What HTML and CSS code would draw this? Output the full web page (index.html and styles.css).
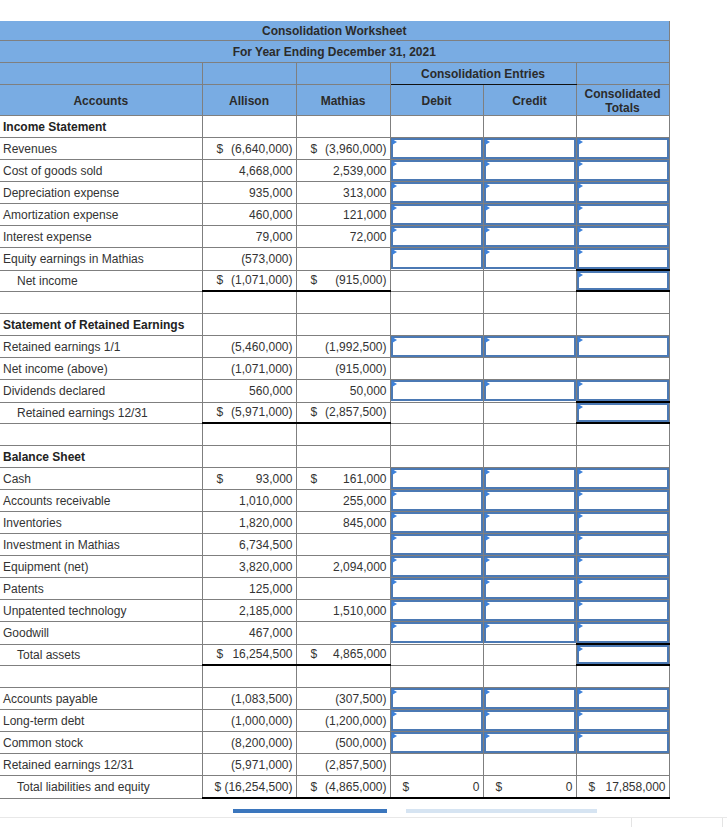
FILE: index.html
```html
<!DOCTYPE html>
<html>
<head>
<meta charset="utf-8">
<link rel="stylesheet" href="styles.css">
</head>
<body>
<div class="page">
<table class="ws">
<colgroup>
<col class="c-acct"><col class="c-al"><col class="c-ma"><col class="c-de"><col class="c-cr"><col class="c-to">
</colgroup>
<thead>
<tr class="h1"><th colspan="6">Consolidation Worksheet</th></tr>
<tr class="h2"><th colspan="6">For Year Ending December 31, 2021</th></tr>
<tr class="h3"><th></th><th></th><th></th><th colspan="2" class="entries">Consolidation Entries</th><th></th></tr>
<tr class="h4"><th>Accounts</th><th>Allison</th><th>Mathias</th><th>Debit</th><th>Credit</th><th class="tot">Consolidated<br>Totals</th></tr>
</thead>
<tbody>
<tr><td class="acct sec">Income Statement</td><td></td><td></td><td></td><td></td><td></td></tr>
<tr><td class="acct">Revenues</td><td class="num"><div class="money"><span>$</span><span>(6,640,000)</span></div></td><td class="num"><div class="money"><span>$</span><span>(3,960,000)</span></div></td><td class="in"><div class="inp"></div></td><td class="in"><div class="inp"></div></td><td class="in"><div class="inp"></div></td></tr>
<tr><td class="acct">Cost of goods sold</td><td class="num">4,668,000</td><td class="num">2,539,000</td><td class="in"><div class="inp"></div></td><td class="in"><div class="inp"></div></td><td class="in"><div class="inp"></div></td></tr>
<tr><td class="acct">Depreciation expense</td><td class="num">935,000</td><td class="num">313,000</td><td class="in"><div class="inp"></div></td><td class="in"><div class="inp"></div></td><td class="in"><div class="inp"></div></td></tr>
<tr><td class="acct">Amortization expense</td><td class="num">460,000</td><td class="num">121,000</td><td class="in"><div class="inp"></div></td><td class="in"><div class="inp"></div></td><td class="in"><div class="inp"></div></td></tr>
<tr><td class="acct">Interest expense</td><td class="num">79,000</td><td class="num">72,000</td><td class="in"><div class="inp"></div></td><td class="in"><div class="inp"></div></td><td class="in"><div class="inp"></div></td></tr>
<tr><td class="acct">Equity earnings in Mathias</td><td class="num">(573,000)</td><td class="num"></td><td class="in"><div class="inp"></div></td><td class="in"><div class="inp"></div></td><td class="in"><div class="inp"></div></td></tr>
<tr class="total"><td class="acct ind">Net income</td><td class="num tl"><div class="money"><span>$</span><span>(1,071,000)</span></div></td><td class="num tl"><div class="money"><span>$</span><span>(915,000)</span></div></td><td></td><td></td><td class="in tl tt"><div class="inp"></div></td></tr>
<tr><td class="acct"></td><td></td><td></td><td></td><td></td><td></td></tr>

<tr><td class="acct sec">Statement of Retained Earnings</td><td></td><td></td><td></td><td></td><td></td></tr>
<tr><td class="acct">Retained earnings 1/1</td><td class="num">(5,460,000)</td><td class="num">(1,992,500)</td><td class="in"><div class="inp"></div></td><td class="in"><div class="inp"></div></td><td class="in"><div class="inp"></div></td></tr>
<tr><td class="acct">Net income (above)</td><td class="num">(1,071,000)</td><td class="num">(915,000)</td><td></td><td></td><td></td></tr>
<tr><td class="acct">Dividends declared</td><td class="num">560,000</td><td class="num">50,000</td><td class="in"><div class="inp"></div></td><td class="in"><div class="inp"></div></td><td class="in"><div class="inp"></div></td></tr>
<tr class="total"><td class="acct ind">Retained earnings 12/31</td><td class="num tl"><div class="money"><span>$</span><span>(5,971,000)</span></div></td><td class="num tl"><div class="money"><span>$</span><span>(2,857,500)</span></div></td><td></td><td></td><td class="in tl tt"><div class="inp"></div></td></tr>
<tr><td class="acct"></td><td></td><td></td><td></td><td></td><td></td></tr>

<tr><td class="acct sec">Balance Sheet</td><td></td><td></td><td></td><td></td><td></td></tr>
<tr><td class="acct">Cash</td><td class="num"><div class="money"><span>$</span><span>93,000</span></div></td><td class="num"><div class="money"><span>$</span><span>161,000</span></div></td><td class="in"><div class="inp"></div></td><td class="in"><div class="inp"></div></td><td class="in"><div class="inp"></div></td></tr>
<tr><td class="acct">Accounts receivable</td><td class="num">1,010,000</td><td class="num">255,000</td><td class="in"><div class="inp"></div></td><td class="in"><div class="inp"></div></td><td class="in"><div class="inp"></div></td></tr>
<tr><td class="acct">Inventories</td><td class="num">1,820,000</td><td class="num">845,000</td><td class="in"><div class="inp"></div></td><td class="in"><div class="inp"></div></td><td class="in"><div class="inp"></div></td></tr>
<tr><td class="acct">Investment in Mathias</td><td class="num">6,734,500</td><td class="num"></td><td class="in"><div class="inp"></div></td><td class="in"><div class="inp"></div></td><td class="in"><div class="inp"></div></td></tr>
<tr><td class="acct">Equipment (net)</td><td class="num">3,820,000</td><td class="num">2,094,000</td><td class="in"><div class="inp"></div></td><td class="in"><div class="inp"></div></td><td class="in"><div class="inp"></div></td></tr>
<tr><td class="acct">Patents</td><td class="num">125,000</td><td class="num"></td><td class="in"><div class="inp"></div></td><td class="in"><div class="inp"></div></td><td class="in"><div class="inp"></div></td></tr>
<tr><td class="acct">Unpatented technology</td><td class="num">2,185,000</td><td class="num">1,510,000</td><td class="in"><div class="inp"></div></td><td class="in"><div class="inp"></div></td><td class="in"><div class="inp"></div></td></tr>
<tr><td class="acct">Goodwill</td><td class="num">467,000</td><td class="num"></td><td class="in"><div class="inp"></div></td><td class="in"><div class="inp"></div></td><td class="in"><div class="inp"></div></td></tr>
<tr class="total"><td class="acct ind">Total assets</td><td class="num tl"><div class="money"><span>$</span><span>16,254,500</span></div></td><td class="num tl"><div class="money"><span>$</span><span>4,865,000</span></div></td><td></td><td></td><td class="in tl tt"><div class="inp"></div></td></tr>
<tr><td class="acct"></td><td></td><td></td><td></td><td></td><td></td></tr>

<tr><td class="acct">Accounts payable</td><td class="num">(1,083,500)</td><td class="num">(307,500)</td><td class="in"><div class="inp"></div></td><td class="in"><div class="inp"></div></td><td class="in"><div class="inp"></div></td></tr>
<tr><td class="acct">Long-term debt</td><td class="num">(1,000,000)</td><td class="num">(1,200,000)</td><td class="in"><div class="inp"></div></td><td class="in"><div class="inp"></div></td><td class="in"><div class="inp"></div></td></tr>
<tr><td class="acct">Common stock</td><td class="num">(8,200,000)</td><td class="num">(500,000)</td><td class="in"><div class="inp"></div></td><td class="in"><div class="inp"></div></td><td class="in"><div class="inp"></div></td></tr>
<tr><td class="acct">Retained earnings 12/31</td><td class="num">(5,971,000)</td><td class="num">(2,857,500)</td><td></td><td></td><td></td></tr>
<tr class="total last"><td class="acct ind">Total liabilities and equity</td><td class="num tl tight"><div class="money"><span>$</span><span>(16,254,500)</span></div></td><td class="num tl"><div class="money"><span>$</span><span>(4,865,000)</span></div></td><td class="num tl sm"><div class="money"><span>$</span><span>0</span></div></td><td class="num tl sm"><div class="money"><span>$</span><span>0</span></div></td><td class="num tl sm"><div class="money"><span>$</span><span>17,858,000</span></div></td></tr>
</tbody>
</table>
<div class="bars"><div class="bar-active"></div><div class="bar-idle"></div></div>
<div class="rule"><div class="seg-a"></div><div class="seg-b"></div></div>
</div>
</body>
</html>
```
FILE: styles.css
```css
html, body {
  margin: 0;
  padding: 0;
  background: #fff;
}
body {
  font-family: "Liberation Sans", Arial, sans-serif;
  font-size: 12px;
  color: #333;
}
.page {
  padding-top: 21px;
  width: 727px;
}
.ws {
  border-collapse: collapse;
  table-layout: fixed;
  width: 669px;
}
.c-acct { width: 202px; }
.c-al { width: 94px; }
.c-ma { width: 94px; }
.c-de { width: 93px; }
.c-cr { width: 93px; }
.c-to { width: 93px; }

.ws th {
  background: #79ace3;
  color: #2b2b2b;
  font-weight: bold;
  font-size: 12px;
  text-align: center;
  border: 1px solid #7f7f7f;
  padding: 0;
  line-height: 14px;
}
.ws thead tr:first-child th { border-top: none; }
.ws th:first-child { border-left: none; }
.h1 th { height: 19px; }
.h2 th { height: 21px; }
.h3 th { height: 21px; }
.h4 th { height: 29px; padding-top: 1px; }
.ws th.entries { border-bottom: 1px solid #111; }

.ws td {
  border: 1px solid #7f7f7f;
  height: 21px;
  padding: 0;
  vertical-align: middle;
  white-space: nowrap;
  line-height: 14px;
}
.ws td:first-child { border-left: none; }
.ws tr.total td { height: 19px; }
.ws tr.total.last td { height: 21px; }
.acct { padding-left: 3px !important; }
.acct.ind { padding-left: 17px !important; }
.acct.sec { font-weight: bold; color: #222; }
.num {
  text-align: right;
  padding-right: 3px !important;
}
.money {
  display: flex;
  justify-content: space-between;
  padding-left: 14px;
}
.tight .money { padding-left: 12px; }
.sm .money { padding-left: 12px; }
.ws td.tl { border-top: 1px solid #000; border-bottom: 2px solid #000; }
.ws td.tt { border-top: 2px solid #000; }

.in { position: relative; }
.inp {
  box-sizing: border-box;
  height: 21px;
  width: 100%;
  border: 2px solid #4b79b4;
  background: #fff;
  position: relative;
}
.ws tr.total .inp { height: 19px; }
.inp::before {
  content: "";
  position: absolute;
  top: -1px;
  left: -1px;
  width: 0;
  height: 0;
  border-left: 5px solid #3d80d8;
  border-top: 3px solid transparent;
  border-bottom: 3px solid transparent;
}

.bars {
  display: flex;
  gap: 19px;
  margin-top: 10px;
  padding-left: 233px;
  height: 4px;
}
.bar-active { width: 154px; background: #3b76bd; }
.bar-idle { width: 191px; background: #d6e4f2; }
.rule {
  display: flex;
  margin-top: 4px;
  border-top: 1px solid #e8e8e8;
  height: 9px;
}
.seg-a { width: 631px; border-right: 1px solid #e4e4e4; }
.seg-b { width: 90px; border-right: 1px solid #e4e4e4; }
```
